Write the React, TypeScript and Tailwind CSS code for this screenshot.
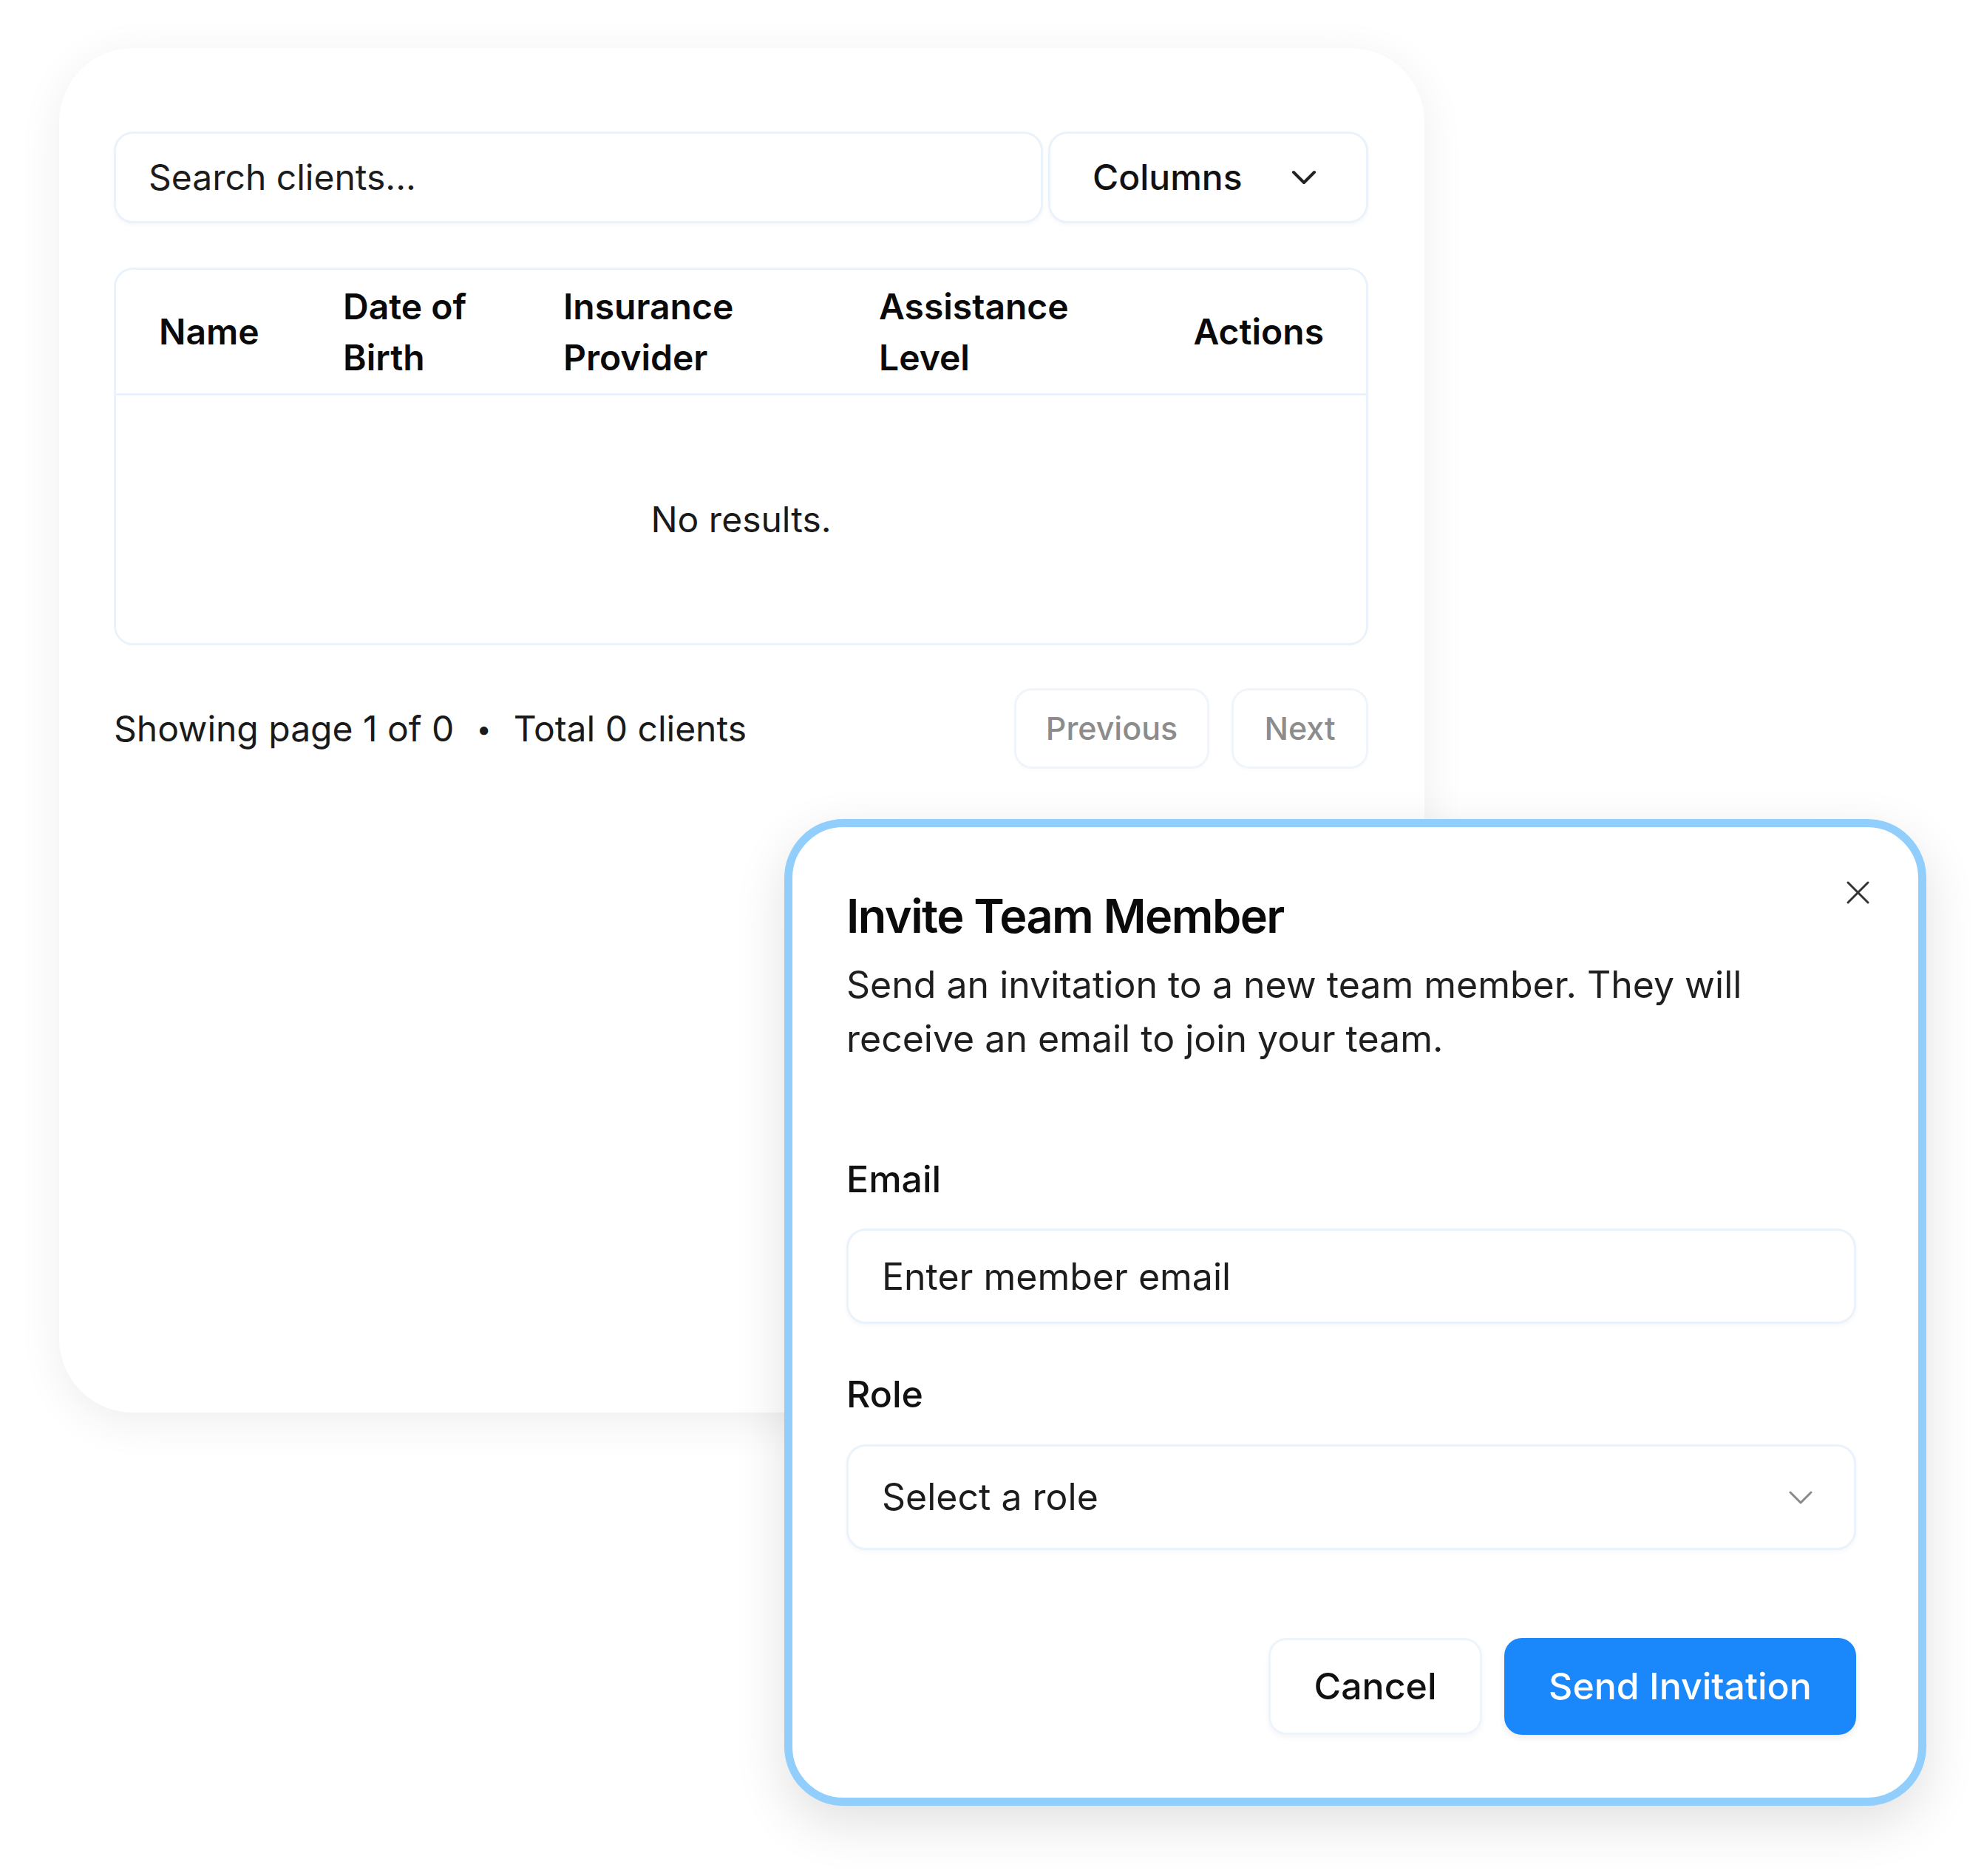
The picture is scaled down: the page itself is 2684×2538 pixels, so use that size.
import React from "react";

const columns = [
  { label: ["Name"] },
  { label: ["Date of", "Birth"] },
  { label: ["Insurance", "Provider"] },
  { label: ["Assistance", "Level"] },
  { label: ["Actions"] },
];

function Chevron({ className }: { className?: string }) {
  return (
    <svg viewBox="0 0 34 20" className={className} fill="none" stroke="currentColor" strokeLinecap="round" strokeLinejoin="round">
      <path d="M3 3l14 14 14-14" />
    </svg>
  );
}

function ClientsCard() {
  return (
    <div className="w-[1847px] h-[1846px] rounded-[100px] bg-white shadow-[0_12px_60px_rgba(0,0,0,0.07)] pl-[74px] pr-[76px] pt-[113px]">
      {/* Toolbar */}
      <div className="flex gap-[7px] h-[124px]">
        <input
          placeholder="Search clients..."
          className="flex-1 min-w-0 rounded-[26px] border-[3px] border-[#eaf2fc] bg-white px-[44px] text-[48px] text-[#111] placeholder:text-[#1c1c1c] shadow-[0_3px_6px_rgba(0,0,0,0.03)] outline-none"
        />
        <button className="w-[433px] flex items-center justify-between rounded-[26px] border-[3px] border-[#eaf2fc] bg-white pl-[57px] pr-[67px] text-[48px] font-medium text-[#111] shadow-[0_3px_6px_rgba(0,0,0,0.03)]">
          Columns
          <Chevron className="w-[34px] h-[20px] stroke-[4px] text-[#222]" />
        </button>
      </div>

      {/* Table */}
      <div className="mt-[60px] rounded-[26px] border-[3px] border-[#eaf2fc] overflow-hidden">
        <div className="grid grid-cols-[249px_298px_427px_424px_1fr] items-center h-[170px] pl-[58px] pr-[57px] border-b-[3px] border-[#eaf2fc] text-[48px] leading-[69px] font-semibold text-[#0a0a0a]">
          {columns.map((c, i) => (
            <div key={i} className={i === columns.length - 1 ? "text-right" : ""}>
              {c.label.map((l) => (
                <div key={l}>{l}</div>
              ))}
            </div>
          ))}
        </div>
        <div className="h-[335px] flex items-center justify-center text-[48px] text-[#1a1a1a]">
          No results.
        </div>
      </div>

      {/* Footer */}
      <div className="mt-[58px] flex items-center justify-between">
        <div className="text-[48px] text-[#1a1a1a] flex items-center">
          <span>Showing page 1 of 0</span>
          <span className="mx-[30px] text-[36px]">•</span>
          <span>Total 0 clients</span>
        </div>
        <div className="flex gap-[30px]">
          <button className="h-[109px] w-[264px] rounded-[24px] border-[3px] border-[#f0f5fb] text-[43px] font-medium text-[#8c8c8c] shadow-[0_2px_5px_rgba(0,0,0,0.02)]">
            Previous
          </button>
          <button className="h-[109px] w-[185px] rounded-[24px] border-[3px] border-[#f0f5fb] text-[43px] font-medium text-[#8c8c8c] shadow-[0_2px_5px_rgba(0,0,0,0.02)]">
            Next
          </button>
        </div>
      </div>
    </div>
  );
}

function InviteDialog() {
  return (
    <div className="absolute left-[1061px] top-[1108px] w-[1545px] rounded-[80px] border-[11px] border-[#92cefb] bg-white shadow-[0_24px_70px_rgba(0,0,0,0.12)] pl-[73px] pr-[84px] pt-[84px] pb-[85px]">
      <button className="absolute right-[65px] top-[72px] text-[#333]" aria-label="Close">
        <svg viewBox="0 0 33 33" className="w-[33px] h-[33px]" fill="none" stroke="currentColor" strokeWidth={3} strokeLinecap="round">
          <path d="M3 3l27 27M30 3L3 30" />
        </svg>
      </button>

      <h2 className="text-[63px] leading-[72px] font-semibold tracking-tight text-[#0a0a0a]">
        Invite Team Member
      </h2>
      <p className="mt-[21px] max-w-[1300px] text-[50px] leading-[73px] text-[#1f1f1f]">
        Send an invitation to a new team member. They will receive an email to join your team.
      </p>

      <div className="mt-[119px] text-[50px] leading-[69px] font-medium text-[#111]">Email</div>
      <input
        placeholder="Enter member email"
        className="mt-[32px] w-full h-[129px] rounded-[26px] border-[3px] border-[#eaf2fc] bg-white px-[45px] text-[50px] placeholder:text-[#1c1c1c] shadow-[0_3px_6px_rgba(0,0,0,0.03)] outline-none"
      />

      <div className="mt-[61px] text-[50px] leading-[69px] font-medium text-[#111]">Role</div>
      <button className="mt-[33px] w-full h-[143px] flex items-center justify-between rounded-[26px] border-[3px] border-[#eaf2fc] bg-white pl-[45px] pr-[55px] text-[50px] text-[#1c1c1c] shadow-[0_3px_6px_rgba(0,0,0,0.03)]">
        Select a role
        <Chevron className="w-[34px] h-[20px] stroke-[3px] text-[#8a8a8a]" />
      </button>

      <div className="mt-[119px] flex justify-end gap-[30px]">
        <button className="h-[131px] w-[289px] rounded-[24px] border-[3px] border-[#eef4fc] bg-white text-[50px] font-medium text-[#111] shadow-[0_4px_8px_rgba(0,0,0,0.04)]">
          Cancel
        </button>
        <button className="h-[131px] w-[476px] rounded-[24px] bg-[#1a88fa] text-[50px] font-medium text-white shadow-[0_4px_8px_rgba(0,0,0,0.08)]">
          Send Invitation
        </button>
      </div>
    </div>
  );
}

export default function App() {
  return (
    <div className="relative w-[2684px] h-[2538px] overflow-hidden bg-white pl-[80px] pt-[65px] font-['Inter',sans-serif]">
      <ClientsCard />
      <InviteDialog />
    </div>
  );
}
